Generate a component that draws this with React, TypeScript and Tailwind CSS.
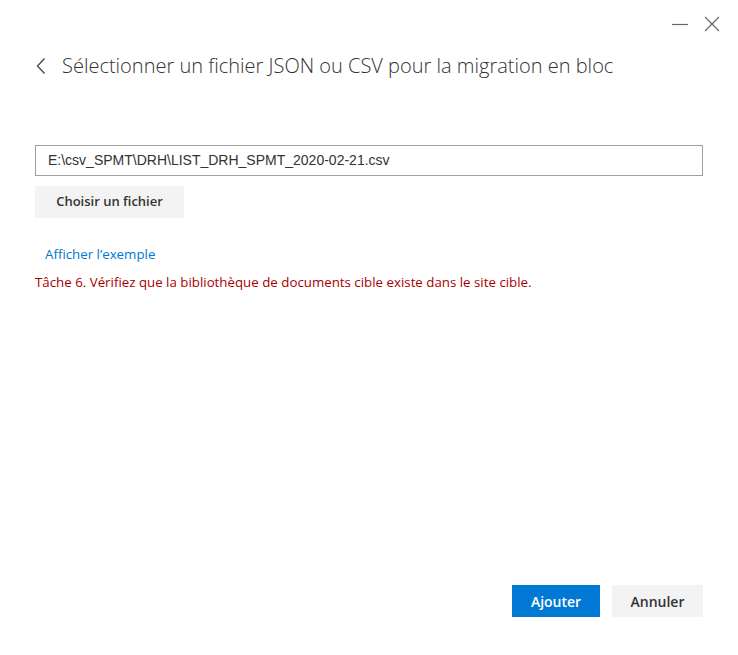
import React from 'react';

const ui = { fontFamily: '"Open Sans", "Liberation Sans", sans-serif' };

export default function App() {
  return (
    <div className="relative h-[655px] w-[738px] bg-white text-[#323130]" style={ui}>
      {/* window controls */}
      <div className="absolute right-[18px] top-[16px] flex items-center gap-[16px]">
        <svg width="16" height="16" viewBox="0 0 16 16">
          <path d="M0 8.5 H16" stroke="#666" strokeWidth="1.2" />
        </svg>
        <svg width="16" height="16" viewBox="0 0 16 16">
          <path d="M1 1 L15 15 M15 1 L1 15" stroke="#666" strokeWidth="1.2" />
        </svg>
      </div>

      <div className="flex flex-col px-[35px] pt-[52px]">
        {/* header */}
        <div className="flex items-center">
          <svg width="10" height="16" viewBox="0 0 10 16" className="ml-[1px]">
            <path d="M8.5 0.5 L1.5 8 L8.5 15.5" fill="none" stroke="#444" strokeWidth="1.3" />
          </svg>
          <h1 className="ml-[16px] text-[20px] font-light leading-[28px] text-[#333]">
            Sélectionner un fichier JSON ou CSV pour la migration en bloc
          </h1>
        </div>

        {/* file input */}
        <div className="mt-[65px] flex h-[31px] w-[668px] items-center border border-[#a0a0a0] px-[12px]">
          <span className="text-[14px] text-[#333]" style={{ fontFamily: '"Liberation Sans", Arial, sans-serif' }}>
            E:\csv_SPMT\DRH\LIST_DRH_SPMT_2020-02-21.csv
          </span>
        </div>
        <button className="mt-[10px] h-[32px] w-[149px] bg-[#f3f3f3] text-[13px] font-semibold text-[#333]">
          Choisir un fichier
        </button>

        <a className="ml-[10px] mt-[25px] text-[13.3px] leading-[22px] text-[#0078d4]">Afficher l’exemple</a>
        <p className="mt-[7px] text-[13.3px] leading-[20px] text-[#a80000]">
          Tâche 6. Vérifiez que la bibliothèque de documents cible existe dans le site cible.
        </p>
      </div>

      {/* footer buttons */}
      <div className="absolute bottom-[38px] right-[35px] flex gap-[12px]">
        <button className="h-[32px] w-[88px] bg-[#0078d4] text-[14px] font-semibold text-white">Ajouter</button>
        <button className="h-[32px] w-[91px] bg-[#f3f3f3] text-[14px] font-semibold text-[#333]">Annuler</button>
      </div>
    </div>
  );
}
